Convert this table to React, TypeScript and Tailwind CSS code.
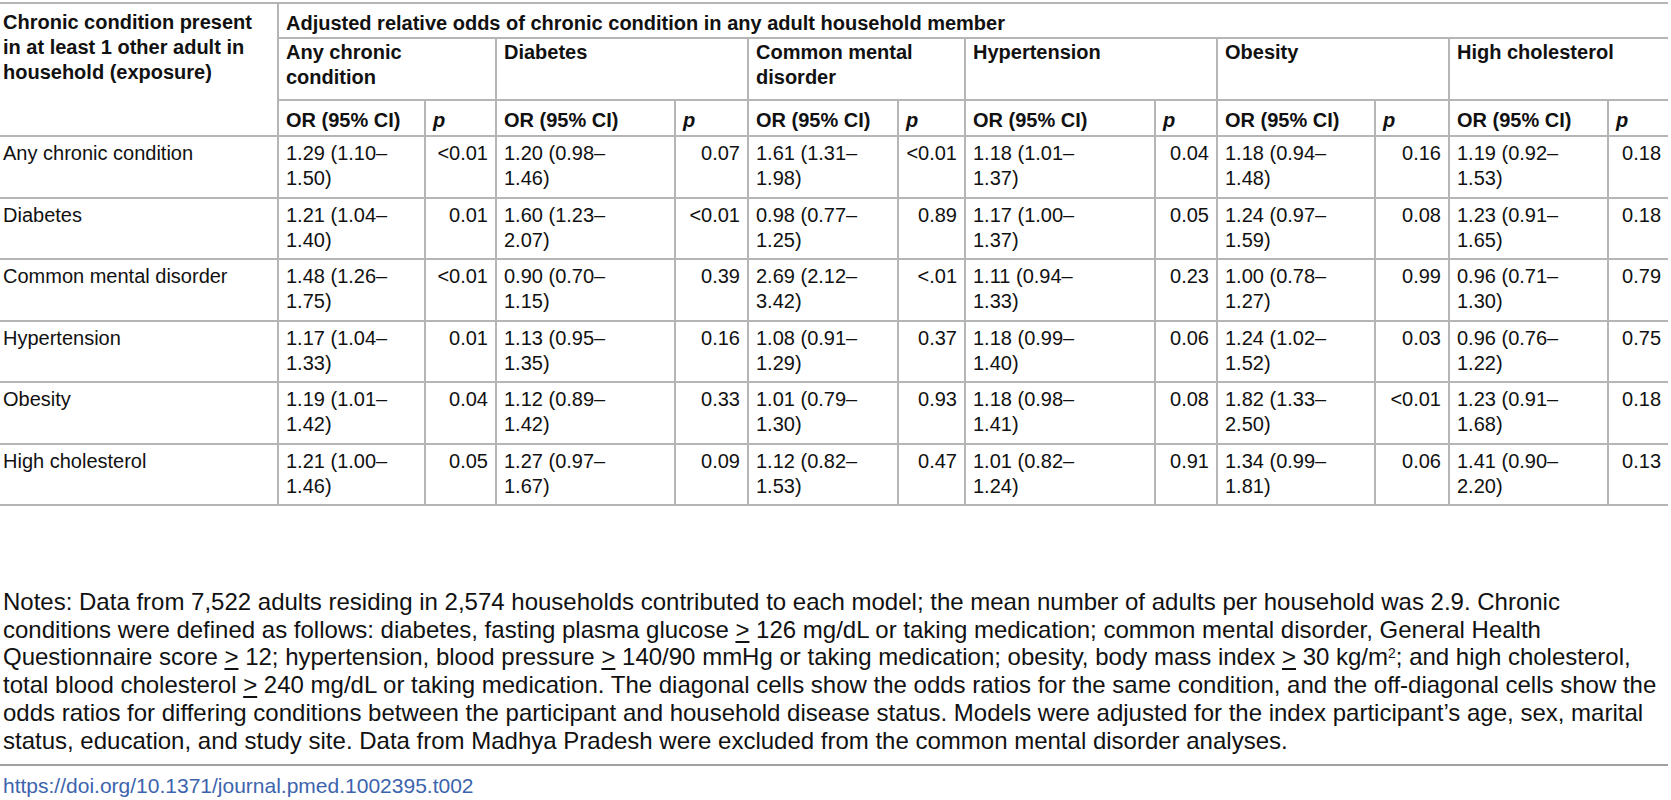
import React from 'react';

type Pair = [string, string];

const groups: React.ReactNode[] = [
  <>Any chronic<br />condition</>,
  'Diabetes',
  <>Common mental<br />disorder</>,
  'Hypertension',
  'Obesity',
  'High cholesterol',
];

const rows: { label: string; cells: Pair[] }[] = [
  {
    label: 'Any chronic condition',
    cells: [
      ['1.29 (1.10–1.50)', '<0.01'],
      ['1.20 (0.98–1.46)', '0.07'],
      ['1.61 (1.31–1.98)', '<0.01'],
      ['1.18 (1.01–1.37)', '0.04'],
      ['1.18 (0.94–1.48)', '0.16'],
      ['1.19 (0.92–1.53)', '0.18'],
    ],
  },
  {
    label: 'Diabetes',
    cells: [
      ['1.21 (1.04–1.40)', '0.01'],
      ['1.60 (1.23–2.07)', '<0.01'],
      ['0.98 (0.77–1.25)', '0.89'],
      ['1.17 (1.00–1.37)', '0.05'],
      ['1.24 (0.97–1.59)', '0.08'],
      ['1.23 (0.91–1.65)', '0.18'],
    ],
  },
  {
    label: 'Common mental disorder',
    cells: [
      ['1.48 (1.26–1.75)', '<0.01'],
      ['0.90 (0.70–1.15)', '0.39'],
      ['2.69 (2.12–3.42)', '<.01'],
      ['1.11 (0.94–1.33)', '0.23'],
      ['1.00 (0.78–1.27)', '0.99'],
      ['0.96 (0.71–1.30)', '0.79'],
    ],
  },
  {
    label: 'Hypertension',
    cells: [
      ['1.17 (1.04–1.33)', '0.01'],
      ['1.13 (0.95–1.35)', '0.16'],
      ['1.08 (0.91–1.29)', '0.37'],
      ['1.18 (0.99–1.40)', '0.06'],
      ['1.24 (1.02–1.52)', '0.03'],
      ['0.96 (0.76–1.22)', '0.75'],
    ],
  },
  {
    label: 'Obesity',
    cells: [
      ['1.19 (1.01–1.42)', '0.04'],
      ['1.12 (0.89–1.42)', '0.33'],
      ['1.01 (0.79–1.30)', '0.93'],
      ['1.18 (0.98–1.41)', '0.08'],
      ['1.82 (1.33–2.50)', '<0.01'],
      ['1.23 (0.91–1.68)', '0.18'],
    ],
  },
  {
    label: 'High cholesterol',
    cells: [
      ['1.21 (1.00–1.46)', '0.05'],
      ['1.27 (0.97–1.67)', '0.09'],
      ['1.12 (0.82–1.53)', '0.47'],
      ['1.01 (0.82–1.24)', '0.91'],
      ['1.34 (0.99–1.81)', '0.06'],
      ['1.41 (0.90–2.20)', '0.13'],
    ],
  },
];

const cols = [
  'w-[278px]',
  'w-[147px]', 'w-[71px]',
  'w-[179px]', 'w-[73px]',
  'w-[150px]', 'w-[67px]',
  'w-[190px]', 'w-[62px]',
  'w-[158px]', 'w-[74px]',
  'w-[159px]', 'w-[60px]',
];

const line = 'border-[#b5b5b5]';

// splits "1.29 (1.10–1.50)" after the dash, like the printed table
const OddsRatio = ({ value }: { value: string }) => {
  const i = value.indexOf('–') + 1;
  return (
    <>
      {value.slice(0, i)}
      <br />
      {value.slice(i)}
    </>
  );
};

const Ge = () => <span className="underline underline-offset-[3px]">&gt;</span>;

const App: React.FC = () => {
  return (
    <div className="w-[1671px] h-[800px] overflow-hidden bg-white text-[#111] font-['Liberation_Sans',Arial,sans-serif] text-[20px] leading-[25px]">
      <table className="mt-[2px] w-[1668px] table-fixed border-collapse">
        <colgroup>
          {cols.map((c, i) => (
            <col key={i} className={c} />
          ))}
        </colgroup>
        <thead className="font-bold text-left">
          <tr>
            <th rowSpan={3} className={`align-top border-t-2 border-b-2 ${line} pl-[3px] pt-[6px] pr-2 font-bold`}>
              Chronic condition present in at least 1 other adult in household (exposure)
            </th>
            <th colSpan={12} className={`border-t-2 border-b-2 border-l-2 ${line} pl-[7px] pt-[7px] pb-[1px]`}>
              Adjusted relative odds of chronic condition in any adult household member
            </th>
          </tr>
          <tr>
            {groups.map((g, i) => (
              <th key={i} colSpan={2} className={`align-top border-b-2 border-l-2 ${line} pl-[7px] pt-[1px] pb-[9px]`}>
                {g}
              </th>
            ))}
          </tr>
          <tr>
            {groups.map((_, i) => (
              <React.Fragment key={i}>
                <th className={`border-b-2 border-l-2 ${line} pl-[7px] pt-[7px] pb-[2px]`}>OR (95% CI)</th>
                <th className={`border-b-2 border-l-2 ${line} pl-[7px] pt-[7px] pb-[2px] italic`}>p</th>
              </React.Fragment>
            ))}
          </tr>
        </thead>
        <tbody>
          {rows.map((r) => (
            <tr key={r.label}>
              <td className={`align-top border-b-2 ${line} pl-[3px] pt-[4px] pb-[5.5px] whitespace-nowrap`}>{r.label}</td>
              {r.cells.map(([or, p], i) => (
                <React.Fragment key={i}>
                  <td className={`align-top border-b-2 border-l-2 ${line} pl-[7px] pt-[4px] pb-[5.5px]`}>
                    <OddsRatio value={or} />
                  </td>
                  <td className={`align-top text-right border-b-2 border-l-2 ${line} pr-[7px] pt-[4px] pb-[5.5px]`}>{p}</td>
                </React.Fragment>
              ))}
            </tr>
          ))}
        </tbody>
      </table>

      <div className="mt-[82px] pl-[3px] text-[24px] leading-[27.7px] whitespace-nowrap">
        <div>
          Notes: Data from 7,522 adults residing in 2,574 households contributed to each model; the mean number of adults per household was 2.9. Chronic
        </div>
        <div>
          conditions were defined as follows: diabetes, fasting plasma glucose <Ge /> 126 mg/dL or taking medication; common mental disorder, General Health
        </div>
        <div>
          Questionnaire score <Ge /> 12; hypertension, blood pressure <Ge /> 140/90 mmHg or taking medication; obesity, body mass index <Ge /> 30 kg/m
          <sup className="text-[14px]">2</sup>; and high cholesterol,
        </div>
        <div>
          total blood cholesterol <Ge /> 240 mg/dL or taking medication. The diagonal cells show the odds ratios for the same condition, and the off-diagonal cells show the
        </div>
        <div>
          odds ratios for differing conditions between the participant and household disease status. Models were adjusted for the index participant’s age, sex, marital
        </div>
        <div>status, education, and study site. Data from Madhya Pradesh were excluded from the common mental disorder analyses.</div>
      </div>
      <div className="mt-[10px] w-[1668px] border-t-2 border-[#a0a0a0]" />
      <div className="mt-[7px] pl-[3px] text-[21px] leading-[26px] text-[#3c64ad]">
        https://doi.org/10.1371/journal.pmed.1002395.t002
      </div>
    </div>
  );
};

export default App;
